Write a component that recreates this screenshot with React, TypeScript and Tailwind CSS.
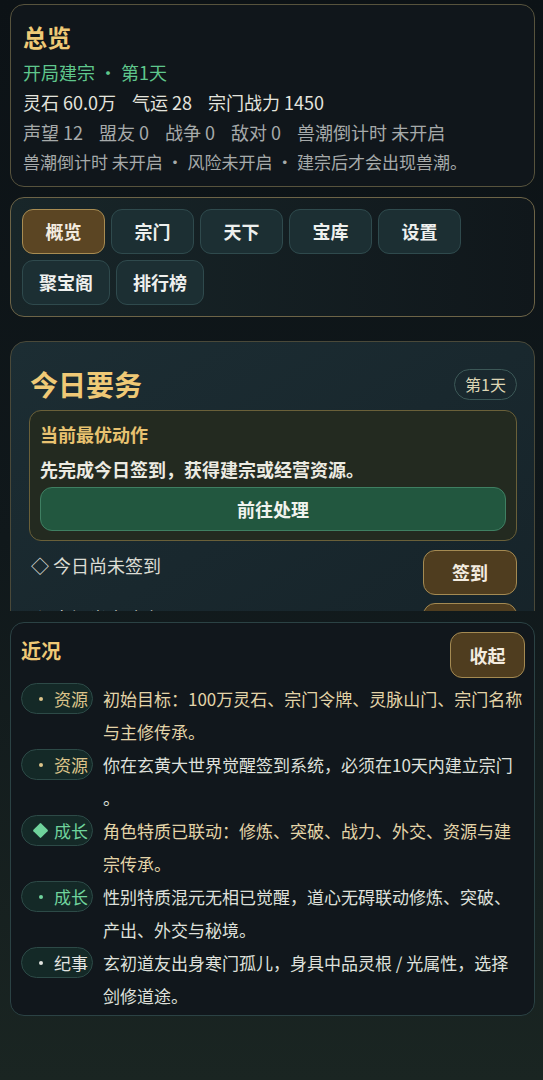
import React from "react";

const tabs = [
  { label: "概览", active: true },
  { label: "宗门" },
  { label: "天下" },
  { label: "宝库" },
  { label: "设置" },
  { label: "聚宝阁" },
  { label: "排行榜" },
];

type Entry = {
  tag: string;
  marker: "dot" | "diamond";
  tone: "gold" | "green" | "white";
  text: string;
  highlight?: boolean;
};

const entries: Entry[] = [
  {
    tag: "资源",
    marker: "dot",
    tone: "gold",
    text: "初始目标：100万灵石、宗门令牌、灵脉山门、宗门名称与主修传承。",
    highlight: true,
  },
  {
    tag: "资源",
    marker: "dot",
    tone: "gold",
    text: "你在玄黄大世界觉醒签到系统，必须在10天内建立宗门。",
  },
  {
    tag: "成长",
    marker: "diamond",
    tone: "green",
    text: "角色特质已联动：修炼、突破、战力、外交、资源与建宗传承。",
    highlight: true,
  },
  {
    tag: "成长",
    marker: "dot",
    tone: "green",
    text: "性别特质混元无相已觉醒，道心无碍联动修炼、突破、产出、外交与秘境。",
  },
  {
    tag: "纪事",
    marker: "dot",
    tone: "white",
    text: "玄初道友出身寒门孤儿，身具中品灵根 / 光属性，选择剑修道途。",
  },
];

const toneClass = {
  gold: "text-[#dcc48a]",
  green: "text-[#6fd39c]",
  white: "text-[#e2e4e0]",
};

function Tag({ entry }: { entry: Entry }) {
  return (
    <span className="flex h-[31px] w-[72px] shrink-0 items-center rounded-full border border-[#2d4a47] bg-[#142927] pl-[10px] text-[17px]">
      <span className={`flex w-[17px] justify-center ${toneClass[entry.tone]}`}>
        {entry.marker === "diamond" ? (
          <span className="block h-[11px] w-[11px] rotate-45 rounded-[1px] bg-[#6fd39c]" />
        ) : (
          <span className="block h-[4px] w-[4px] rounded-full bg-current" />
        )}
      </span>
      <span className={`ml-[5px] leading-none ${toneClass[entry.tone]}`}>{entry.tag}</span>
    </span>
  );
}

export default function App() {
  return (
    <div
      className="flex h-[1080px] flex-col bg-gradient-to-b from-[#0c1216] via-[#10181b] to-[#1a2522] text-[#e4e4de]"
      style={{ fontFamily: '"Noto Sans CJK SC", "Noto Sans", sans-serif' }}
    >
      {/* scrolling area */}
      <div className="h-[611px] shrink-0 overflow-hidden pl-[10px] pr-[8px] pt-[4px]">
        {/* overview */}
        <section className="rounded-[14px] border border-[#57533d] bg-[#10161b] px-[12px] pb-[9px] pt-[16px]">
          <h1 className="mb-[4px] text-[24px] font-bold leading-[32px] text-[#efc976]">总览</h1>
          <div className="text-[18px] leading-[30px] text-[#5fc78c]">开局建宗 · 第1天</div>
          <div className="flex flex-wrap gap-x-[16px] text-[18px] leading-[30px] text-[#e4e4de]">
            <span>灵石 60.0万</span>
            <span>气运 28</span>
            <span>宗门战力 1450</span>
          </div>
          <div className="flex flex-wrap gap-x-[16px] text-[18px] leading-[30px] text-[#a6aaaa]">
            <span>声望 12</span>
            <span>盟友 0</span>
            <span>战争 0</span>
            <span>敌对 0</span>
            <span>兽潮倒计时 未开启</span>
          </div>
          <div className="text-[17px] leading-[30px] text-[#a6aaaa]">
            兽潮倒计时 未开启 · 风险未开启 · 建宗后才会出现兽潮。
          </div>
        </section>

        {/* tabs */}
        <nav className="mt-[10px] flex flex-wrap gap-[6px] rounded-[14px] border border-[#6d6447] bg-gradient-to-r from-[#182629] to-[#10171b] p-[11px]">
          {tabs.map((t) => (
            <button
              key={t.label}
              className={
                t.active
                  ? "h-[45px] min-w-[83px] rounded-[11px] border border-[#a88c52] bg-[#5b4523] px-[16px] text-[18px] font-bold text-[#f3ece0]"
                  : "h-[45px] min-w-[83px] rounded-[11px] border border-[#2f4a4d] bg-[#1c2f33] px-[16px] text-[18px] font-bold text-[#eef0ee]"
              }
            >
              {t.label}
            </button>
          ))}
        </nav>

        {/* today */}
        <section className="mt-[24px] rounded-[16px] border border-[#4a4939] bg-gradient-to-br from-[#1c2d33] to-[#162329] pb-[20px] pl-[18px] pr-[17px] pt-[24px]">
          <div className="flex items-center justify-between pl-[1px]">
            <h2 className="text-[28px] font-bold leading-[36px] text-[#efc976]">今日要务</h2>
            <span className="flex h-[31px] items-center rounded-full border border-[#3c5857] px-[10px] text-[16px] text-[#ddd6b5]">
              第1天
            </span>
          </div>

          <div className="mt-[8px] rounded-[12px] border border-[#6a6039] bg-[#232a20] px-[10px] pb-[9px] pt-[10px]">
            <div className="text-[18px] font-bold leading-[26px] text-[#e8c270]">当前最优动作</div>
            <div className="mt-[9px] text-[18px] font-bold leading-[26px] text-[#ecebe2]">
              先完成今日签到，获得建宗或经营资源。
            </div>
            <button className="mt-[5px] h-[44px] w-full rounded-[12px] border border-[#3f7f62] bg-[#22573f] text-[18px] font-bold text-[#f1f3ee]">
              前往处理
            </button>
          </div>

          <div className="mt-[9px] flex items-start justify-between">
            <span className="pl-[2px] text-[18px] leading-[30px] text-[#dcdcd4]">◇ 今日尚未签到</span>
            <button className="h-[45px] w-[94px] rounded-[12px] border border-[#a48a52] bg-[#4f3d1f] text-[18px] font-bold text-[#f3ece0]">
              签到
            </button>
          </div>
          <div className="mt-[8px] flex items-start justify-between">
            <span className="pl-[2px] text-[18px] leading-[30px] text-[#dcdcd4]">◇ 宗门尚未建立</span>
            <button className="h-[45px] w-[94px] rounded-[12px] border border-[#a48a52] bg-[#4f3d1f] text-[18px] font-bold text-[#f3ece0]">
              建宗
            </button>
          </div>
        </section>
      </div>

      {/* recent */}
      <section className="ml-[10px] mr-[8px] mt-[11px] rounded-[14px] border border-[#2b4244] bg-[#11171c] pb-[3px] pl-[10px] pr-[9px] pt-[9px]">
        <div className="flex h-[46px] items-start justify-between">
          <h3 className="pt-[5px] text-[20px] font-bold leading-[28px] text-[#efc976]">近况</h3>
          <button className="h-[46px] w-[75px] rounded-[12px] border border-[#a48a52] bg-[#4f3d1f] text-[18px] font-bold text-[#f3ece0]">
            收起
          </button>
        </div>
        <ul className="mt-[4px]">
          {entries.map((e, i) => (
            <li key={i} className="flex items-start gap-[10px]">
              <div className="pt-[1px]">
                <Tag entry={e} />
              </div>
              <p
                className={`min-w-0 flex-1 text-[17px] leading-[33px] [line-break:anywhere] ${
                  e.highlight ? "text-[#e3d4a8]" : "text-[#dfe0db]"
                }`}
              >
                {e.text}
              </p>
            </li>
          ))}
        </ul>
      </section>
    </div>
  );
}
